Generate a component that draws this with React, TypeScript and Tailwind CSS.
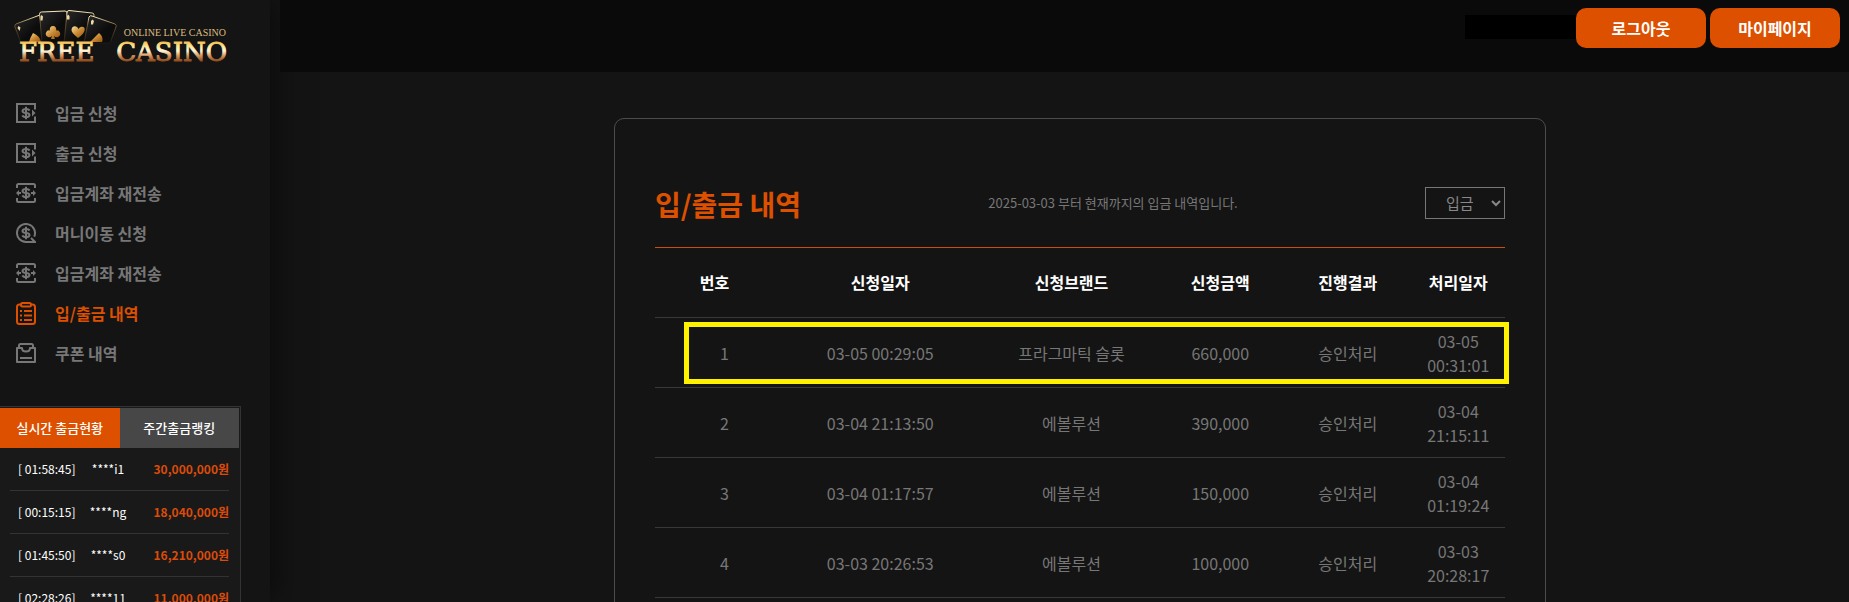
import React from "react";

type IconName = "deposit" | "transfer" | "exchange" | "list" | "coupon";

const menu: { label: string; icon: IconName; active?: boolean }[] = [
  { label: "입금 신청", icon: "deposit" },
  { label: "출금 신청", icon: "deposit" },
  { label: "입금계좌 재전송", icon: "transfer" },
  { label: "머니이동 신청", icon: "exchange" },
  { label: "입금계좌 재전송", icon: "transfer" },
  { label: "입/출금 내역", icon: "list", active: true },
  { label: "쿠폰 내역", icon: "coupon" },
];

const payouts = [
  { time: "01:58:45", user: "****i1", amount: "30,000,000원" },
  { time: "00:15:15", user: "****ng", amount: "18,040,000원" },
  { time: "01:45:50", user: "****s0", amount: "16,210,000원" },
  { time: "02:28:26", user: "****11", amount: "11,000,000원" },
];

const columns = [
  { label: "번호", width: "w-[14%]" },
  { label: "신청일자", width: "w-[25%]" },
  { label: "신청브랜드", width: "w-[20%]" },
  { label: "신청금액", width: "w-[15%]" },
  { label: "진행결과", width: "w-[15%]" },
  { label: "처리일자", width: "w-[11%]" },
];

const rows = [
  ["1", "03-05 00:29:05", "프라그마틱 슬롯", "660,000", "승인처리", "03-05 00:31:01"],
  ["2", "03-04 21:13:50", "에볼루션", "390,000", "승인처리", "03-04 21:15:11"],
  ["3", "03-04 01:17:57", "에볼루션", "150,000", "승인처리", "03-04 01:19:24"],
  ["4", "03-03 20:26:53", "에볼루션", "100,000", "승인처리", "03-03 20:28:17"],
];

const dollar =
  "M13.5 7.600C13 6.300 11.800 5.900 10 5.900 7.800 5.900 6.500 6.700 6.500 8s1.300 1.800 3.500 2 3.500.8 3.500 2-1.300 2.100-3.500 2.100c-1.900 0-3.100-.5-3.600-1.800M10 3.800v12.400";

function MenuIcon({ name }: { name: IconName }) {
  return (
    <svg
      viewBox={name === "list" ? "0 0 20 23" : "0 0 20 20"}
      className={name === "list" ? "h-[23px] w-5 shrink-0" : "h-5 w-5 shrink-0"}
      fill="none"
      stroke="currentColor"
      strokeWidth="2"
      aria-hidden="true"
    >
      {name === "deposit" && (
        <>
          <path d="M19 6.500V1H1v18h18v-5.500" />
          <path d={dollar} />
          <path d="M16 6.500v7l3.500-3.500z" fill="currentColor" stroke="none" />
        </>
      )}
      {name === "transfer" && (
        <>
          <path d="M1 5V2.500Q1 1 2.500 1h15Q19 1 19 2.500V5M1 15v2.500Q1 19 2.500 19h15q1.500 0 1.500-1.500V15" />
          <path d={dollar} />
          <path d="M1 10h4M15 10h4" />
          <path d="M3 7 0 10l3 3zM17 7l3 3-3 3z" fill="currentColor" stroke="none" />
        </>
      )}
      {name === "exchange" && (
        <>
          <path d="M10 19a9 9 0 1 1 8.200-5.300" />
          <path d="M10 19h9l-4-4" />
          <path d={dollar} />
        </>
      )}
      {name === "list" && (
        <>
          <path d="M5 2.500H3.500Q1 2.500 1 5v14.500Q1 22 3.500 22h13q2.500 0 2.500-2.500V5q0-2.500-2.500-2.500H15" />
          <rect x="5" y="1" width="10" height="3.500" rx="1.500" />
          <path d="M4 9h2M8 9h8M4 13.500h2M8 13.500h8M4 18h2M8 18h8" />
        </>
      )}
      {name === "coupon" && (
        <>
          <path d="M3 5.500V2.500Q3 1 4.500 1h11Q17 1 17 2.500v3" />
          <path d="M1 19V5h5q0 3.500 4 3.500T14 5h5v14z" strokeLinejoin="round" />
          <path d="M4 15h12" />
        </>
      )}
    </svg>
  );
}

function Logo() {
  return (
    <svg viewBox="0 0 232 64" className="h-16 w-[232px]" role="img" aria-label="Free Casino">
      <defs>
        <linearGradient id="gold" gradientUnits="userSpaceOnUse" x1="0" y1="33" x2="0" y2="53">
          <stop offset="0" stopColor="#f0b545" />
          <stop offset="0.25" stopColor="#ffe590" />
          <stop offset="0.5" stopColor="#fff6dc" />
          <stop offset="0.7" stopColor="#dda268" />
          <stop offset="1" stopColor="#8d4a1c" />
        </linearGradient>
        <linearGradient id="suit" x1="0" y1="0" x2="1" y2="1">
          <stop offset="0" stopColor="#fbe09a" />
          <stop offset="0.5" stopColor="#c98a34" />
          <stop offset="1" stopColor="#94520f" />
        </linearGradient>
        <linearGradient id="edge" x1="0" y1="0" x2="0" y2="1">
          <stop offset="0" stopColor="#fff0c0" />
          <stop offset="0.35" stopColor="#6d5530" />
          <stop offset="1" stopColor="#1c1916" />
        </linearGradient>
        <linearGradient id="face" x1="0" y1="0" x2="1" y2="1">
          <stop offset="0" stopColor="#2a2a2a" />
          <stop offset="0.6" stopColor="#0c0c0c" />
        </linearGradient>
      </defs>
      <g fill="url(#face)" stroke="url(#edge)" strokeWidth="1">
        <path d="M3 19Q2 17 4 16L28 7l3 28H9z" />
        <path d="M27.500 6q0-2 2-2L53 3q2 0 2 2v30H30z" />
        <path d="M55 5q0-2.500 2-2.500L80 5q2 0 2 2l-4 28H52z" />
        <path d="M77 9q1-2 3-1l23 8q2 1 1 3l-6 16H72z" />
      </g>
      <g fill="url(#suit)">
        <path d="M21 25q-3 5-4 9h12q-1-6-8-9z" />
        <path d="M41 18a3.200 3.200 0 0 1 3 4.500 3.400 3.400 0 1 1-2 5.300l1 3.200h-4l1-3.200a3.400 3.400 0 1 1-2-5.300 3.200 3.200 0 0 1 3-4.500z" />
        <path d="M66 30q-7-5.500-6.500-8.500 1-4 4.500-3 2 .5 2.500 2.500 1-2 3-2.200 3.500-.3 3.200 3.200Q72 26 66 30z" />
        <path d="M87 25q5 4 3 9H78q4-4 9-9z" />
      </g>
      <g fill="#ecd9a4">
        <path d="M5.500 20l1-2 2 1.500-1 3.500zM28.500 8.500 29.500 7l1.500 1.500-.5 4h-2zM55 8l1-1.500L57.500 8v3.500H55zM79 13l1.500-1.500L82 13l-1 3.500h-2z" />
      </g>
      <text x="214" y="28" textAnchor="end" fontFamily="'Liberation Serif', serif" fontSize="10" fill="#dcbd80">
        ONLINE LIVE CASINO
      </text>
      <g
        fontFamily="'DejaVu Serif', serif"
        fontSize="26"
        fill="url(#gold)"
        stroke="url(#gold)"
        strokeWidth="0.9"
      >
        <text x="7" y="53">FREE</text>
        <text x="215" y="53" textAnchor="end">CASINO</text>
      </g>
    </svg>
  );
}

export default function App() {
  return (
    <div className="flex h-screen overflow-hidden bg-[#141414] font-['Noto_Sans_CJK_KR','Noto_Sans',sans-serif] text-white">
      <aside className="z-10 flex w-[270px] shrink-0 flex-col bg-[#141414] shadow-[5px_0_30px_rgba(0,0,0,0.5)]">
        <a href="#home" className="ml-3 mt-2 block">
          <Logo />
        </a>
        <nav aria-label="메뉴" className="mt-[21px]">
          <ul>
            {menu.map((item, i) => (
              <li key={i}>
                <a
                  href="#menu"
                  className={
                    "flex h-10 items-center gap-[19px] pl-4 text-base font-bold " +
                    (item.active ? "text-[#dc5000]" : "text-[#777777]")
                  }
                >
                  <MenuIcon name={item.icon} />
                  <span>{item.label}</span>
                </a>
              </li>
            ))}
          </ul>
        </nav>
        <section className="mt-[33px] w-[241px] flex-1 border-r border-t border-[#333333] bg-[#191919] pr-px pt-px">
          <div className="flex h-10 text-[13px] font-medium">
            <button type="button" className="flex-1 bg-[#dc5000]">실시간 출금현황</button>
            <button type="button" className="flex-1 bg-[#474747]">주간출금랭킹</button>
          </div>
          <ul className="mx-[10px] text-xs">
            {payouts.map((p) => (
              <li key={p.time} className="flex h-[43px] items-center border-b border-[#333333]">
                <span className="w-[73px] pl-2">[ {p.time}]</span>
                <span className="w-[50px] text-center">{p.user}</span>
                <span className="flex-1 text-right font-bold text-[#dc4b0a]">{p.amount}</span>
              </li>
            ))}
          </ul>
        </section>
      </aside>

      <div className="flex min-w-0 flex-1 flex-col">
        <div className="flex shrink-0">
          <header className="relative z-20 ml-[10px] flex h-[72px] flex-1 items-start justify-end gap-1 bg-[#0a0a0a] pr-[9px] pt-2">
            <div className="-mr-1 mt-[7px] h-6 w-[111px] bg-black" />
            <button type="button" className="h-10 w-[130px] rounded-[10px] bg-[#dc5000] font-bold">로그아웃</button>
            <button type="button" className="h-10 w-[130px] rounded-[10px] bg-[#dc5000] font-bold">마이페이지</button>
          </header>
        </div>

        <main className="flex-1 pl-[41px] pt-[46px]">
          <section className="mx-auto min-h-screen max-w-[932px] rounded-[10px] border border-[#4c4c4c] px-10 pt-[68px] text-[#777777]">
            <div className="flex h-[61px] items-start justify-between border-b border-[#c8500f]">
              <h1 className="text-[28px] font-bold leading-[34px] text-[#dc5000]">입/출금 내역</h1>
              <p className="text-[13px] leading-8">2025-03-03 부터 현재까지의 입금 내역입니다.</p>
              <select aria-label="구분" defaultValue="입금" className="h-8 w-20 border border-[#777777] bg-[#141414] pb-0.5 pl-4 text-[15px] text-[#888888]">
                <option>입금</option>
                <option>출금</option>
              </select>
            </div>
            <div className="relative">
              <table className="w-full table-fixed border-separate border-spacing-0 text-center text-base">
                <thead>
                  <tr className="text-white">
                    {columns.map((c) => (
                      <th key={c.label} scope="col" className={c.width + " h-[70px] border-b border-[#383838] pb-0.5 font-bold"}>
                        {c.label}
                      </th>
                    ))}
                  </tr>
                </thead>
                <tbody>
                  {rows.map((row) => (
                    <tr key={row[0]}>
                      {row.map((cell, i) => (
                        <td key={i} className="h-[70px] border-b border-[#383838] leading-6 first:pl-5">{cell}</td>
                      ))}
                    </tr>
                  ))}
                </tbody>
              </table>
              <div className="pointer-events-none absolute -right-1 left-[29px] top-[74px] h-[62px] border-5 border-[#fff200]" />
            </div>
          </section>
        </main>
      </div>
    </div>
  );
}
